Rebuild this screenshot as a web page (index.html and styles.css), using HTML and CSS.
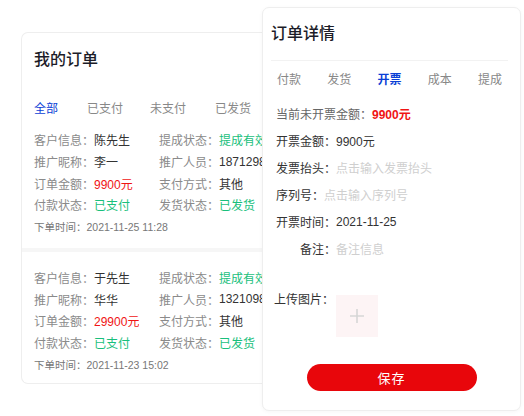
FILE: index.html
```html
<!DOCTYPE html>
<html lang="zh-CN">
<head>
    <meta charset="UTF-8">
    <meta name="viewport" content="width=device-width, initial-scale=1.0">
    <title>订单</title>
    <link rel="stylesheet" href="styles.css">
</head>
<body>
    <div class="orders">
        <h1 class="title">我的订单</h1>
        <div class="tabs">
            <span class="tab active">全部</span>
            <span class="tab">已支付</span>
            <span class="tab">未支付</span>
            <span class="tab">已发货</span>
        </div>

        <div class="order">
            <div class="row">
                <div class="cell"><span class="label">客户信息：</span><span class="value">陈先生</span></div>
                <div class="cell"><span class="label">提成状态：</span><span class="value green">提成有效</span></div>
            </div>
            <div class="row">
                <div class="cell"><span class="label">推广昵称：</span><span class="value">李一</span></div>
                <div class="cell"><span class="label">推广人员：</span><span class="value">1871298</span></div>
            </div>
            <div class="row">
                <div class="cell"><span class="label">订单金额：</span><span class="value red">9900元</span></div>
                <div class="cell"><span class="label">支付方式：</span><span class="value">其他</span></div>
            </div>
            <div class="row">
                <div class="cell"><span class="label">付款状态：</span><span class="value green">已支付</span></div>
                <div class="cell"><span class="label">发货状态：</span><span class="value green">已发货</span></div>
            </div>
            <div class="time">下单时间：2021-11-25 11:28</div>
        </div>

        <div class="order">
            <div class="row">
                <div class="cell"><span class="label">客户信息：</span><span class="value">于先生</span></div>
                <div class="cell"><span class="label">提成状态：</span><span class="value green">提成有效</span></div>
            </div>
            <div class="row">
                <div class="cell"><span class="label">推广昵称：</span><span class="value">华华</span></div>
                <div class="cell"><span class="label">推广人员：</span><span class="value">1321098</span></div>
            </div>
            <div class="row">
                <div class="cell"><span class="label">订单金额：</span><span class="value red">29900元</span></div>
                <div class="cell"><span class="label">支付方式：</span><span class="value">其他</span></div>
            </div>
            <div class="row">
                <div class="cell"><span class="label">付款状态：</span><span class="value green">已支付</span></div>
                <div class="cell"><span class="label">发货状态：</span><span class="value green">已发货</span></div>
            </div>
            <div class="time">下单时间：2021-11-23 15:02</div>
        </div>
    </div>

    <div class="detail">
        <h2 class="detail-title">订单详情</h2>
        <div class="detail-tabs">
            <span class="tab">付款</span>
            <span class="tab">发货</span>
            <span class="tab active">开票</span>
            <span class="tab">成本</span>
            <span class="tab">提成</span>
        </div>

        <div class="fields">
            <div class="field"><span class="muted">当前未开票金额：</span><span class="red bold">9900元</span></div>
            <div class="field"><span>开票金额：</span><span>9900元</span></div>
            <div class="field"><span>发票抬头：</span><span class="placeholder">点击输入发票抬头</span></div>
            <div class="field"><span>序列号：</span><span class="placeholder">点击输入序列号</span></div>
            <div class="field"><span>开票时间：</span><span>2021-11-25</span></div>
            <div class="field indent"><span>备注：</span><span class="placeholder">备注信息</span></div>
        </div>

        <div class="upload">
            <span class="upload-label">上传图片：</span>
            <div class="upload-box">
                <svg width="16" height="16" viewBox="0 0 16 16">
                    <path d="M8 1v14M1 8h14" stroke="#d6d6d6" stroke-width="1.6" fill="none"/>
                </svg>
            </div>
        </div>

        <button class="save">保存</button>
    </div>
</body>
</html>
```

FILE: styles.css
```css
body {
    font-family: "Liberation Sans", "Noto Sans CJK SC", sans-serif;
    margin: 0;
    padding: 0;
    background-color: #fff;
    color: #333;
    width: 524px;
    height: 416px;
    overflow: hidden;
    position: relative;
}

.orders {
    margin: 32px 0 0 21px;
    width: 240px;
    border: 1px solid #eeeeee;
    border-right: none;
    border-radius: 7px 0 0 7px;
    overflow: hidden;
}

.title {
    margin: 0;
    padding: 16px 0 0 12px;
    height: 22px;
    font-size: 16px;
    line-height: 22px;
    font-weight: 500;
    color: #1c1c28;
}

.tabs {
    display: flex;
    align-items: center;
    height: 20px;
    padding: 26px 0 0 12px;
    font-size: 12px;
    white-space: nowrap;
}

.tabs .tab {
    flex-shrink: 0;
    color: #888;
    margin-right: 29px;
}

.tabs .tab:nth-child(2) {
    margin-right: 27px;
}

.tabs .tab.active {
    color: #0b3fd6;
}

.order {
    padding: 12px 0 10px 12px;
}

.order + .order {
    border-top: 4px solid #f6f6f6;
    padding-top: 15px;
    padding-bottom: 7px;
}

.row {
    display: grid;
    grid-template-columns: 125px 103px;
    height: 21.7px;
    align-items: center;
    font-size: 12px;
    white-space: nowrap;
}

.cell {
    display: flex;
    align-items: center;
    min-width: 0;
}

.label {
    color: #8a8a8a;
    flex-shrink: 0;
}

.value {
    color: #333;
    min-width: 0;
    overflow: hidden;
}

.green {
    color: #19c07c;
}

.red {
    color: #f01414;
}

.bold {
    font-weight: bold;
}

.time {
    display: flex;
    align-items: center;
    height: 22px;
    font-size: 10.5px;
    color: #777;
}

/* 订单详情 panel sits over the list */
.detail {
    position: absolute;
    left: 262px;
    top: 7px;
    width: 257px;
    height: 402px;
    background-color: #fff;
    border: 1px solid #eeeeee;
    border-radius: 7px;
    box-shadow: 0 1px 4px rgba(0, 0, 0, 0.04);
}

.detail-title {
    margin: 0 12px 0 8px;
    padding: 15px 0 15px;
    height: 22px;
    font-size: 16px;
    line-height: 22px;
    font-weight: 500;
    color: #1c1c28;
    border-bottom: 1px solid #f2f2f2;
}

.detail-tabs {
    display: flex;
    justify-content: space-between;
    align-items: center;
    height: 20px;
    padding: 7px 18px 0 14px;
    font-size: 12px;
}

.detail-tabs .tab {
    color: #888;
}

.detail-tabs .tab.active {
    color: #0b3fd6;
    font-weight: bold;
}

.fields {
    padding: 12px 0 0 13px;
}

.field {
    display: flex;
    align-items: center;
    height: 27px;
    font-size: 12px;
    color: #333;
    white-space: nowrap;
}

.muted {
    color: #666;
}

.placeholder {
    color: #cfcfcf;
}

.indent {
    padding-left: 24px;
}

.upload {
    display: flex;
    align-items: flex-start;
    padding: 33px 0 0 11px;
    font-size: 12px;
}

.upload-label {
    line-height: 12px;
    margin-top: -1px;
}

.upload-box {
    width: 42px;
    height: 42px;
    margin-left: 2px;
    background-color: #fdf4f5;
    display: flex;
    justify-content: center;
    align-items: center;
}

.save {
    display: block;
    margin: 27px auto 0;
    width: 170px;
    height: 27px;
    border: none;
    border-radius: 14px;
    background-color: #e8060b;
    color: #fff;
    font-family: "Liberation Sans", "Noto Sans CJK SC", sans-serif;
    font-size: 13px;
    letter-spacing: 1px;
    cursor: pointer;
}
```
